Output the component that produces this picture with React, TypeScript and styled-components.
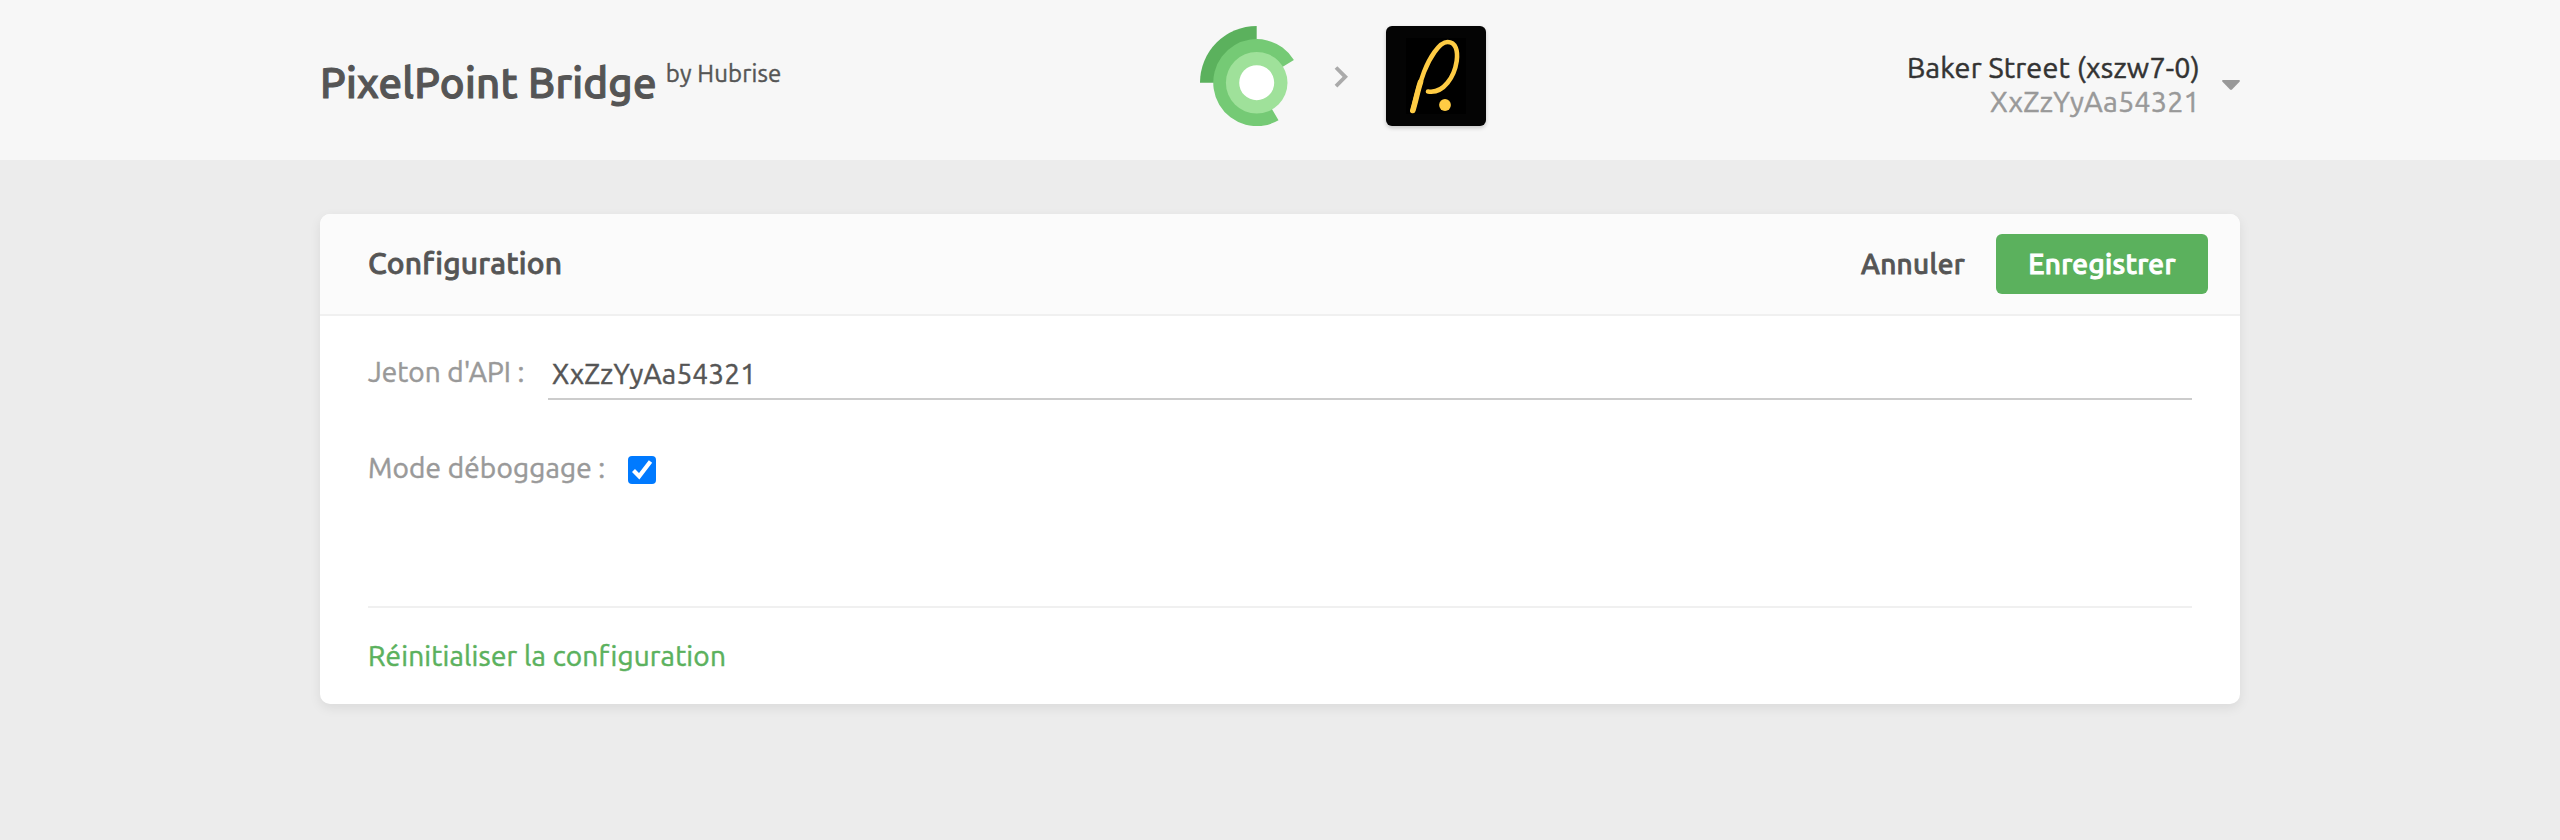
import React, { useState } from "react";
import styled, { createGlobalStyle } from "styled-components";

const GlobalStyle = createGlobalStyle`
  *, *::before, *::after { box-sizing: border-box; }
  body {
    margin: 0;
    min-height: 100vh;
    background: #ececec;
    color: #555;
    font-family: Ubuntu, "Noto Sans", sans-serif;
    font-size: 28px;
    letter-spacing: 0.18px;
    -webkit-text-stroke: 0.5px;
  }
`;

const Header = styled.header`
  height: 160px;
  background: #f7f7f7;
`;

const HeaderInner = styled.div`
  display: grid;
  grid-template-columns: 880px auto 1fr;
  width: 1920px;
  height: 100%;
  margin: 0 auto;
`;

const Brand = styled.h1`
  margin: 0;
  padding-top: 53px;
  font-size: 42px;
  font-weight: 500;
  line-height: 60px;
  letter-spacing: 0.24px;
  white-space: nowrap;
  -webkit-text-stroke: 1.1px;
`;

const Byline = styled.span`
  display: inline-block;
  margin-left: 9px;
  font-size: 24px;
  font-weight: 400;
  line-height: 30px;
  letter-spacing: 0.15px;
  vertical-align: 16px;
  -webkit-text-stroke: 0.4px;
`;

const Apps = styled.div`
  display: flex;
  align-items: flex-start;
  padding-top: 26px;
`;

const Chevron = styled.svg`
  margin: 39px 38px 0 40px;
`;

const AppTile = styled.svg`
  border-radius: 6px;
  background: #040404;
  box-shadow: 0 2px 4px rgba(0, 0, 0, 0.2);
`;

const Account = styled.button`
  display: flex;
  align-items: flex-start;
  justify-self: end;
  padding: 50px 0 0;
  border: 0;
  background: none;
  color: #333;
  font: inherit;
  font-size: 28.8px;
  line-height: 34px;
  letter-spacing: inherit;
  text-align: right;
`;

const AccountText = styled.span`
  display: block;
  margin-right: 22px;
`;

const AccountName = styled.span`
  display: block;
`;

const AccountToken = styled.span`
  display: block;
  color: #999;
`;

const Caret = styled.svg`
  margin-top: 30px;
`;

const Card = styled.main`
  width: 1920px;
  margin: 54px auto 0;
  border-radius: 10px;
  background: #fff;
  box-shadow: 0 4px 12px rgba(0, 0, 0, 0.08);
`;

const CardHeader = styled.div`
  display: flex;
  align-items: center;
  height: 102px;
  padding: 0 32px 0 48px;
  border-bottom: 2px solid #f0f0f0;
  border-radius: 10px 10px 0 0;
  background: #fbfbfb;
`;

const CardTitle = styled.h2`
  margin: 0 auto 0 0;
  padding-bottom: 2px;
  font-size: 30px;
  font-weight: 500;
  line-height: 34px;
  letter-spacing: 0.22px;
  -webkit-text-stroke: 0.8px;
`;

const Button = styled.button<{ $primary?: boolean }>`
  width: ${(p) => (p.$primary ? "212px" : "auto")};
  height: 60px;
  margin-left: ${(p) => (p.$primary ? "31px" : "0")};
  padding: 0 0 2px;
  border: 0;
  border-radius: 6px;
  background: ${(p) => (p.$primary ? "#5bb15d" : "transparent")};
  color: ${(p) => (p.$primary ? "#fff" : "#555")};
  font: inherit;
  font-weight: 500;
  letter-spacing: 0.3px;
  -webkit-text-stroke: ${(p) => (p.$primary ? "1px" : "0.8px")};
`;

const CardBody = styled.div`
  padding: 32px 48px 0;
`;

const Field = styled.div<{ $offset?: number }>`
  display: flex;
  margin-top: ${(p) => p.$offset ?? 0}px;
`;

const Label = styled.label<{ $width: number; $spacing: number }>`
  flex: none;
  width: ${(p) => p.$width}px;
  color: #999;
  line-height: 47px;
  letter-spacing: ${(p) => p.$spacing}px;
  white-space: nowrap;
`;

const DebugLabel = styled(Label)`
  line-height: 39px;
`;

const TextInput = styled.input`
  flex: 1;
  height: 52px;
  padding: 1px 4px 0;
  border: 0;
  border-bottom: 2px solid #ccc;
  border-radius: 0;
  outline: 0;
  background: transparent;
  color: #555;
  font: inherit;
  letter-spacing: inherit;
`;

const Check = styled.button`
  width: 28px;
  height: 28px;
  margin-top: 8px;
  padding: 0;
  border: 0;
  border-radius: 4px;
  background: #007aff;
  line-height: 0;
`;

const CardFooter = styled.div`
  margin-top: 119px;
  border-top: 2px solid #f0f0f0;
  line-height: 96px;
`;

const ResetLink = styled.a`
  color: #5bb15d;
  text-decoration: none;
`;

function RingLogo() {
  return (
    <svg width="94" height="100" viewBox="0 0 94 100">
      <path d="M56.7 56.7H0A56.7 56.7 0 0 1 56.7 0Z" fill="#5bb15d" />
      <path d="M56.7 56.7L78.5 94.3A43.5 43.5 0 1 1 93.9 34Z" fill="#75ca75" />
      <circle cx="56.7" cy="56.7" r="30.8" fill="#9fe19a" />
      <circle cx="56.7" cy="56.7" r="17.5" fill="#fff" />
    </svg>
  );
}

function PixelPointLogo() {
  return (
    <AppTile width="100" height="100" viewBox="0 0 100 100">
      <path d="M20 12h60v76H20z" fill="#000" />
      <g fill="none" stroke="#fc4" strokeLinecap="round" strokeLinejoin="round">
        <path
          d="M26.8 84.5C30 72 31 64 38 46C43 33 53 16 61.5 16C70 16 72 25 70.7 35C68.5 50 58 68 42 65.5"
          strokeWidth="4.6"
        />
        <path d="M26.8 84.5C29.5 76 31 67 34.5 56" strokeWidth="5.6" />
      </g>
      <circle cx="59" cy="79" r="5.9" fill="#fc4" />
    </AppTile>
  );
}

export default function App() {
  const [token, setToken] = useState("XxZzYyAa54321");
  const [debug, setDebug] = useState(true);

  return (
    <>
      <GlobalStyle />
      <Header>
        <HeaderInner>
          <Brand>
            PixelPoint Bridge<Byline>by Hubrise</Byline>
          </Brand>
          <Apps>
            <RingLogo />
            <Chevron width="14" height="24" viewBox="0 0 14 24" fill="none">
              <path d="M2 2.5L11.3 11.8L2 21.1" stroke="#aaa" strokeWidth="3.8" />
            </Chevron>
            <PixelPointLogo />
          </Apps>
          <Account>
            <AccountText>
              <AccountName>Baker Street (xszw7-0)</AccountName>
              <AccountToken>XxZzYyAa54321</AccountToken>
            </AccountText>
            <Caret width="18" height="10" viewBox="0 0 18 10">
              <path d="M1 0H17Q18.5 .5 17.5 1.7L10 9.5Q9 10.4 8 9.5L.5 1.7Q-.5 .5 1 0Z" fill="#999" />
            </Caret>
          </Account>
        </HeaderInner>
      </Header>
      <Card>
        <CardHeader>
          <CardTitle>Configuration</CardTitle>
          <Button>Annuler</Button>
          <Button $primary>Enregistrer</Button>
        </CardHeader>
        <CardBody>
          <Field>
            <Label htmlFor="token" $width={180} $spacing={0.06}>
              Jeton d'API :
            </Label>
            <TextInput id="token" value={token} onChange={(e) => setToken(e.target.value)} />
          </Field>
          <Field $offset={48}>
            <DebugLabel $width={260} $spacing={0.15}>
              Mode déboggage :
            </DebugLabel>
            <Check role="checkbox" aria-checked={debug} onClick={() => setDebug(!debug)}>
              {debug && (
                <svg width="28" height="28" viewBox="0 0 28 28" fill="none">
                  <path d="M5.5 14.5L11.2 20.3L22.5 5.5" stroke="#fff" strokeWidth="4.2" />
                </svg>
              )}
            </Check>
          </Field>
          <CardFooter>
            <ResetLink>Réinitialiser la configuration</ResetLink>
          </CardFooter>
        </CardBody>
      </Card>
    </>
  );
}
